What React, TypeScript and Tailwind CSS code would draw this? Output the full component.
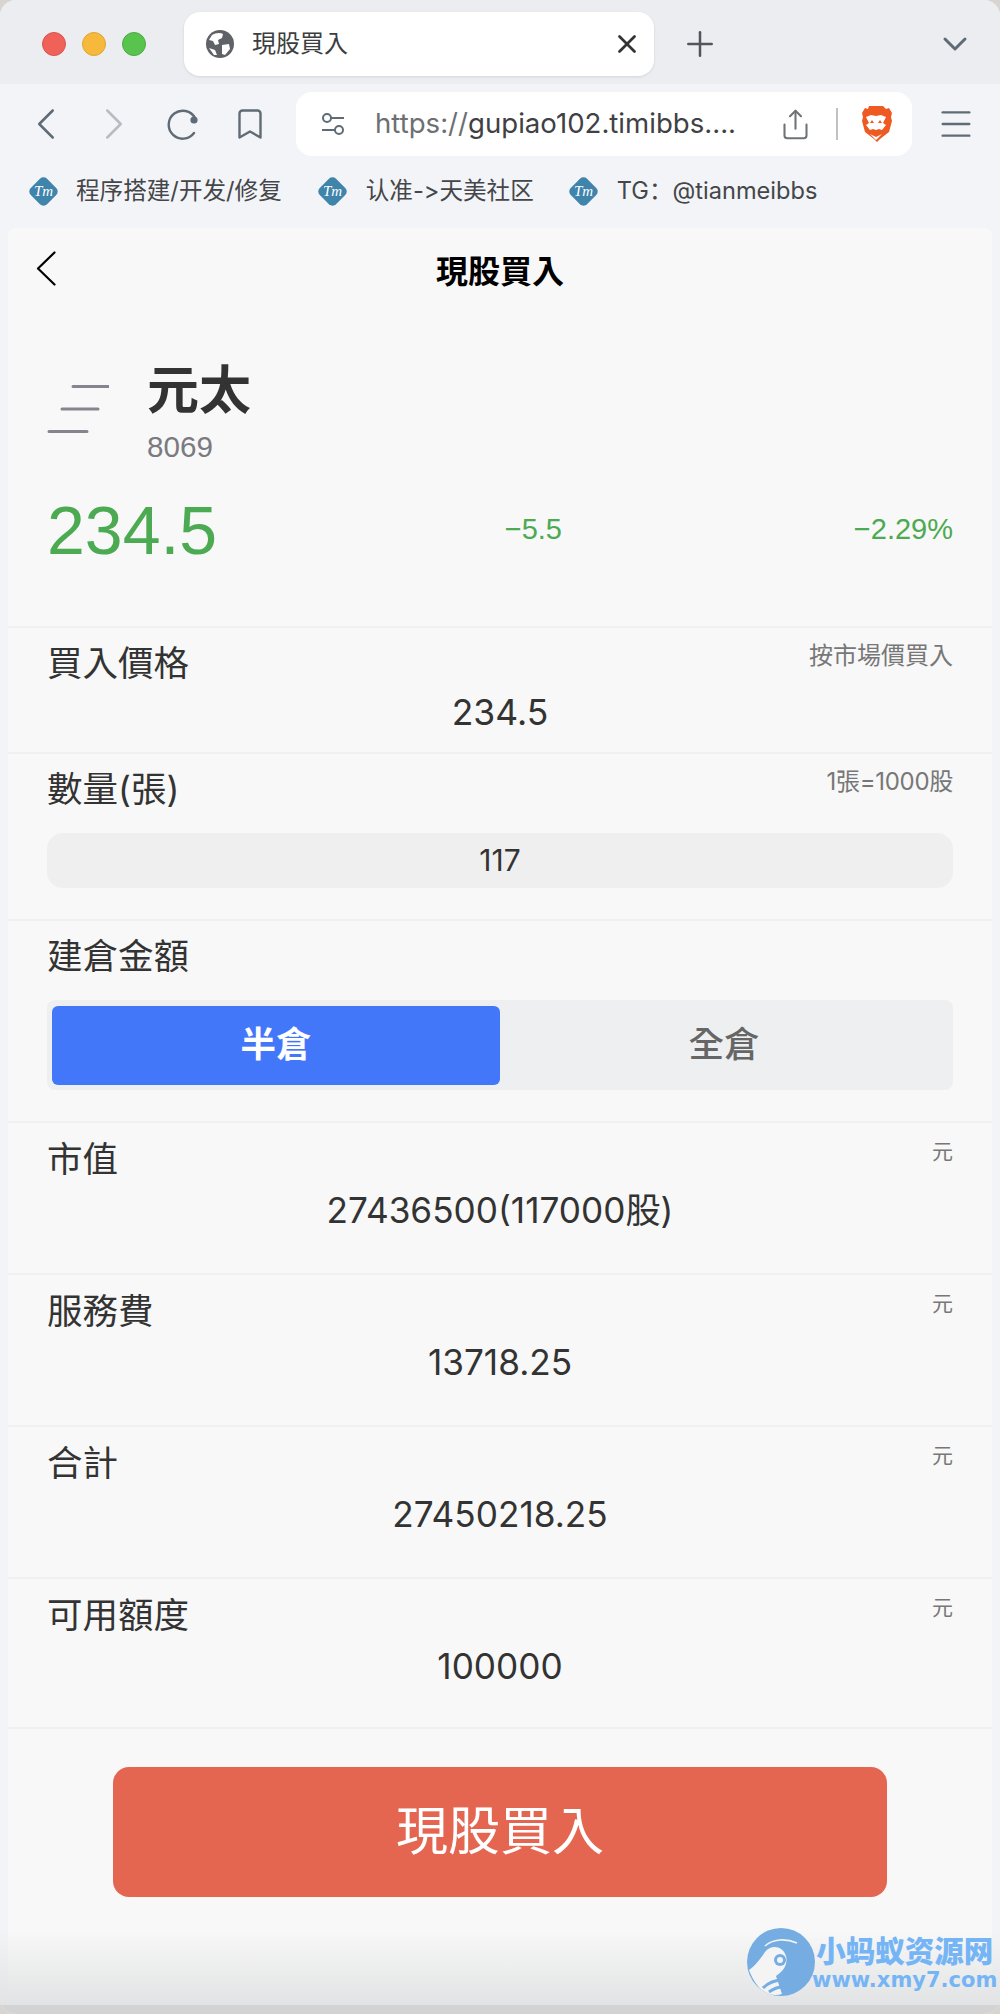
import React from 'react';
import { ChevronLeft, ChevronRight, ChevronDown, Plus, X, Bookmark, Share, Menu } from 'lucide-react';

const cjk = 'font-["Inter","Noto_Sans_CJK_TC",sans-serif]';

const TmLogo = () => (
  <div className="w-[30px] h-[30px] flex items-center justify-center shrink-0">
    <div className="w-[23px] h-[23px] rotate-45 rounded-[5px] bg-[#3f84ab] flex items-center justify-center">
      <span className='-rotate-45 text-white italic text-[15px] leading-none font-["Liberation_Serif",serif]'>Tm</span>
    </div>
  </div>
);

const BookmarkItem = ({ label, className }: { label: string; className: string }) => (
  <div className={`flex items-center gap-[18px] ${className}`}>
    <TmLogo />
    <span className='text-[23.6px] leading-none text-[#444649] [font-variant-ligatures:none] [font-feature-settings:"calt"_0] font-["Inter","Noto_Sans_CJK_SC",sans-serif]'>{label}</span>
  </div>
);

const BraveIcon = () => (
  <svg width="32" height="36" viewBox="0 0 32 36">
    <path d="M9 0h14l3 3 3-1 3 5-1 4 1 4-3 11-9 7-3 3-3-3-9-7L2 15l1-4-1-4 3-5 3 1z" fill="#ef5a22" />
    <path d="M6 11l5-2 5 1 5-1 5 2-3 6 3 2-4 5-3-1-3 1-3-1-3 1-4-5 3-2z" fill="#fff" />
    <path d="M12 14l2 3-4 0zM20 14l-2 3 4 0zM14 25h4l-2 2z" fill="#ef5a22" />
    <path d="M10 28l6 3 6-3-6 6z" fill="#fff" />
  </svg>
);

const Row = ({ label, note, value, last }: { label: string; note: string; value: string; last?: boolean }) => (
  <div className={`h-[152px] px-[39px] pt-[14px] border-t-2 border-[#f0f0f0] ${last ? 'border-b-2' : ''}`}>
    <div className="flex justify-between items-start">
      <span className="text-[35.5px] leading-[44px] mt-[1px] text-[#333]">{label}</span>
      <span className="text-[21px] leading-[30px] text-[#777]">{note}</span>
    </div>
    <div className="text-center text-[35.2px] leading-[44px] text-[#333] mt-[6px]">{value}</div>
  </div>
);

export default function App() {
  return (
    <div className={`relative w-[1000px] h-[2014px] bg-[#d8d4cf] ${cjk}`}>
      <div className="w-full h-full rounded-[16px] overflow-hidden bg-[#f2f4f7] flex flex-col">
        {/* tab strip */}
        <div className="h-[84px] pt-[4px] bg-[#ebedf1] flex items-center pl-[42px] pr-[25px] shrink-0">
          <div className="flex gap-[16px]">
            <div className="w-[24px] h-[24px] rounded-full bg-[#f0615a] border border-[#d9534c]" />
            <div className="w-[24px] h-[24px] rounded-full bg-[#f6b93b] border border-[#dfa52f]" />
            <div className="w-[24px] h-[24px] rounded-full bg-[#59c44d] border border-[#4aab40]" />
          </div>
          <div className="ml-[38px] w-[470px] h-[64px] rounded-[16px] bg-white shadow-[0_1px_3px_rgba(0,0,0,0.1)] flex items-center pl-[22px] pr-[12px]">
            <svg width="28" height="28" viewBox="0 0 28 28" className="shrink-0">
              <circle cx="14" cy="14" r="14" fill="#5f6368" />
              <path d="M6 5c3-2 8-3 11-1l-1 4-4 2 1 4-4 1-2-4-4-1zM16 15l7-1 1 5-5 6-3-1zM3 18l6 2 2 5-3 0z" fill="#fff" />
            </svg>
            <span className="ml-[18px] text-[24px] leading-none text-[#3c3e41]">現股買入</span>
            <X className="ml-auto text-[#333]" size={30} strokeWidth={2.2} />
          </div>
          <Plus className="ml-[26px] text-[#50555a]" size={40} strokeWidth={1.5} />
          <ChevronDown className="ml-auto text-[#5f6b75]" size={40} strokeWidth={1.8} />
        </div>
        {/* toolbar */}
        <div className="h-[80px] flex items-center pl-[19px] shrink-0">
          <ChevronLeft className="text-[#5f6b75]" size={54} strokeWidth={1.1} />
          <ChevronRight className="text-[#b8bcc0] ml-[14px]" size={54} strokeWidth={1.1} />
          <svg width="32" height="32" viewBox="0 0 32 32" className="ml-[26px] shrink-0">
            <path d="M28 10A14 14 0 1 0 27 25" fill="none" stroke="#5f6b75" strokeWidth="2.4" strokeLinecap="round" />
            <circle cx="27" cy="12" r="3.6" fill="#5f6b75" />
          </svg>
          <Bookmark className="ml-[33px] text-[#5f6b75]" size={36} strokeWidth={1.6} />
          <div className="ml-[28px] w-[616px] h-[64px] rounded-[16px] bg-white flex items-center pl-[24px] pr-[20px]">
            <svg width="26" height="26" viewBox="0 0 26 26" className="shrink-0">
              <g fill="none" stroke="#5f6b75" strokeWidth="2">
                <circle cx="7" cy="7" r="4" /><path d="M11 7h13M2 19h13" /><circle cx="19" cy="19" r="4" />
              </g>
            </svg>
            <span className='ml-[29px] text-[27.6px] leading-none text-[#3f4144] font-["Inter",sans-serif] whitespace-nowrap'>
              <span className="text-[#6d6f72]">https://</span>gupiao102.timibbs....
            </span>
            <Share className="ml-auto mr-[1px] text-[#6d7377]" size={33} strokeWidth={1.5} />
            <div className="ml-[23px] w-[2px] h-[32px] bg-[#bfc2c5]" />
            <div className="ml-[22px] shrink-0"><BraveIcon /></div>
          </div>
          <Menu className="ml-[24px] text-[#5f6b75]" size={40} strokeWidth={1.4} />
        </div>
        {/* bookmarks */}
        <div className="h-[64px] pb-[10px] flex items-center pl-[28px] shrink-0">
          <BookmarkItem label="程序搭建/开发/修复" className="" />
          <BookmarkItem label="认准->天美社区" className="ml-[36px]" />
          <BookmarkItem label="TG：@tianmeibbs" className="ml-[35px]" />
        </div>
        {/* page */}
        <div className="relative mx-[8px] flex-1 bg-[#f8f8f8] rounded-t-[8px] overflow-hidden">
          <div className="h-[89px] relative flex items-center justify-center">
            <svg width="20" height="35" viewBox="0 0 20 35" className="absolute left-[28px] top-[23px]">
              <path d="M18.5 1.5 2 17.5l16.5 16" fill="none" stroke="#000" strokeWidth="2.2" strokeLinecap="round" strokeLinejoin="round" />
            </svg>
            <span className="text-[32px] font-bold text-black mt-[-2px]">現股買入</span>
          </div>
          <div className="h-[309px] px-[39px] pt-[40px]">
            <div className="flex">
              <svg width="62" height="62" viewBox="0 0 62 62" className="mt-[28px] shrink-0">
                <path d="M26 1.5h36M15 24h36M2 46.5h38" stroke="#84858f" strokeWidth="3" strokeLinecap="round" fill="none" />
              </svg>
              <div className="ml-[38px] -mt-[2px]">
                <div className="text-[52px] leading-[72px] font-bold text-[#333]">元太</div>
                <div className='text-[29.6px] leading-[40px] text-[#7a7a80] font-["Liberation_Sans",sans-serif]'>8069</div>
              </div>
            </div>
            <div className='mt-[27px] flex items-center font-["Liberation_Sans",sans-serif]'>
              <div className="w-[515px] flex items-center justify-between">
                <span className="text-[68px] leading-[72px] text-[#4caa52]">234.5</span>
                <span className="text-[29px] text-[#4caa52]">−5.5</span>
              </div>
              <span className="ml-auto text-[29px] text-[#4caa52]">−2.29%</span>
            </div>
          </div>
          {/* price */}
          <div className="h-[126px] px-[39px] pt-[14px] border-t-2 border-[#f0f0f0]">
            <div className="flex justify-between items-start">
              <span className="text-[35.5px] leading-[44px] text-[#333]">買入價格</span>
              <span className="text-[24px] leading-[28px] text-[#777]">按市場價買入</span>
            </div>
            <div className="text-center text-[35.5px] leading-[44px] text-[#333] mt-[5px]">234.5</div>
          </div>
          {/* qty */}
          <div className="h-[167px] px-[39px] pt-[14px] border-t-2 border-[#f0f0f0]">
            <div className="flex justify-between items-start">
              <span className="text-[35.5px] leading-[44px] text-[#333]">數量(張)</span>
              <span className="text-[24px] leading-[28px] tracking-[-0.3px] text-[#777]">1張=1000股</span>
            </div>
            <div className="mt-[21px] h-[55px] rounded-[16px] bg-[#efefef] flex items-center justify-center text-[30px] text-[#333]">117</div>
          </div>
          {/* position */}
          <div className="h-[202px] px-[39px] pt-[14px] border-t-2 border-[#f0f0f0]">
            <span className="block text-[35.5px] leading-[44px] text-[#333]">建倉金額</span>
            <div className="mt-[21px] h-[90px] rounded-[8px] bg-[#eeeff1] flex items-center p-[5px]">
              <div className="flex-1 h-[79px] rounded-[6px] bg-[#4377fa] text-white text-[35.5px] font-bold flex items-center justify-center">半倉</div>
              <div className="flex-1 h-[79px] text-[#666] text-[35.5px] font-medium flex items-center justify-center">全倉</div>
            </div>
          </div>
          <Row label="市值" note="元" value="27436500(117000股)" />
          <Row label="服務費" note="元" value="13718.25" />
          <Row label="合計" note="元" value="27450218.25" />
          <Row label="可用額度" note="元" value="100000" last />
          <div className="mt-[38px] mx-[105px] h-[130px] rounded-[16px] bg-[#e46651] flex items-center justify-center text-white text-[52px]">現股買入</div>
        </div>
        <div className="h-[9px] shrink-0 bg-[#d3d3d4]" />
      </div>
      {/* bottom fade */}
      <div className="absolute left-0 right-0 bottom-[9px] h-[76px] bg-gradient-to-b from-transparent to-[#e2e3e4]" />
      {/* watermark */}
      <div className="absolute left-[747px] top-[1928px] flex items-center">
        <svg width="68" height="68" viewBox="0 0 68 68" className="shrink-0 -mr-[3px]">
          <circle cx="34" cy="34" r="34" fill="#75ade3" />
          <path d="M2 42c6-4 12-12 16-18 6-8 18-6 21 4 2 8-2 15-10 20l6 18c-10 3-24 0-33-24z" fill="#f4f4f5" />
          <circle cx="33" cy="32" r="6" fill="#75ade3" /><circle cx="33" cy="32" r="3" fill="#f4f4f5" />
          <path d="M18 18c8-7 20-8 32-3" stroke="#f4f4f5" strokeWidth="1.6" fill="none" />
          <path d="M16 60c6-6 14-8 20-8M22 64c4-3 10-5 14-5" stroke="#75ade3" strokeWidth="3" fill="none" />
        </svg>
        <div className='flex flex-col items-center font-["Noto_Sans_CJK_SC",sans-serif] font-bold text-[#75b5f5]'>
          <span className="text-[29.5px] leading-[36px] font-black">小蚂蚁资源网</span>
          <span className='text-[21px] leading-[26px] font-["DejaVu_Sans",sans-serif]'>www.xmy7.com</span>
        </div>
      </div>
    </div>
  );
}
